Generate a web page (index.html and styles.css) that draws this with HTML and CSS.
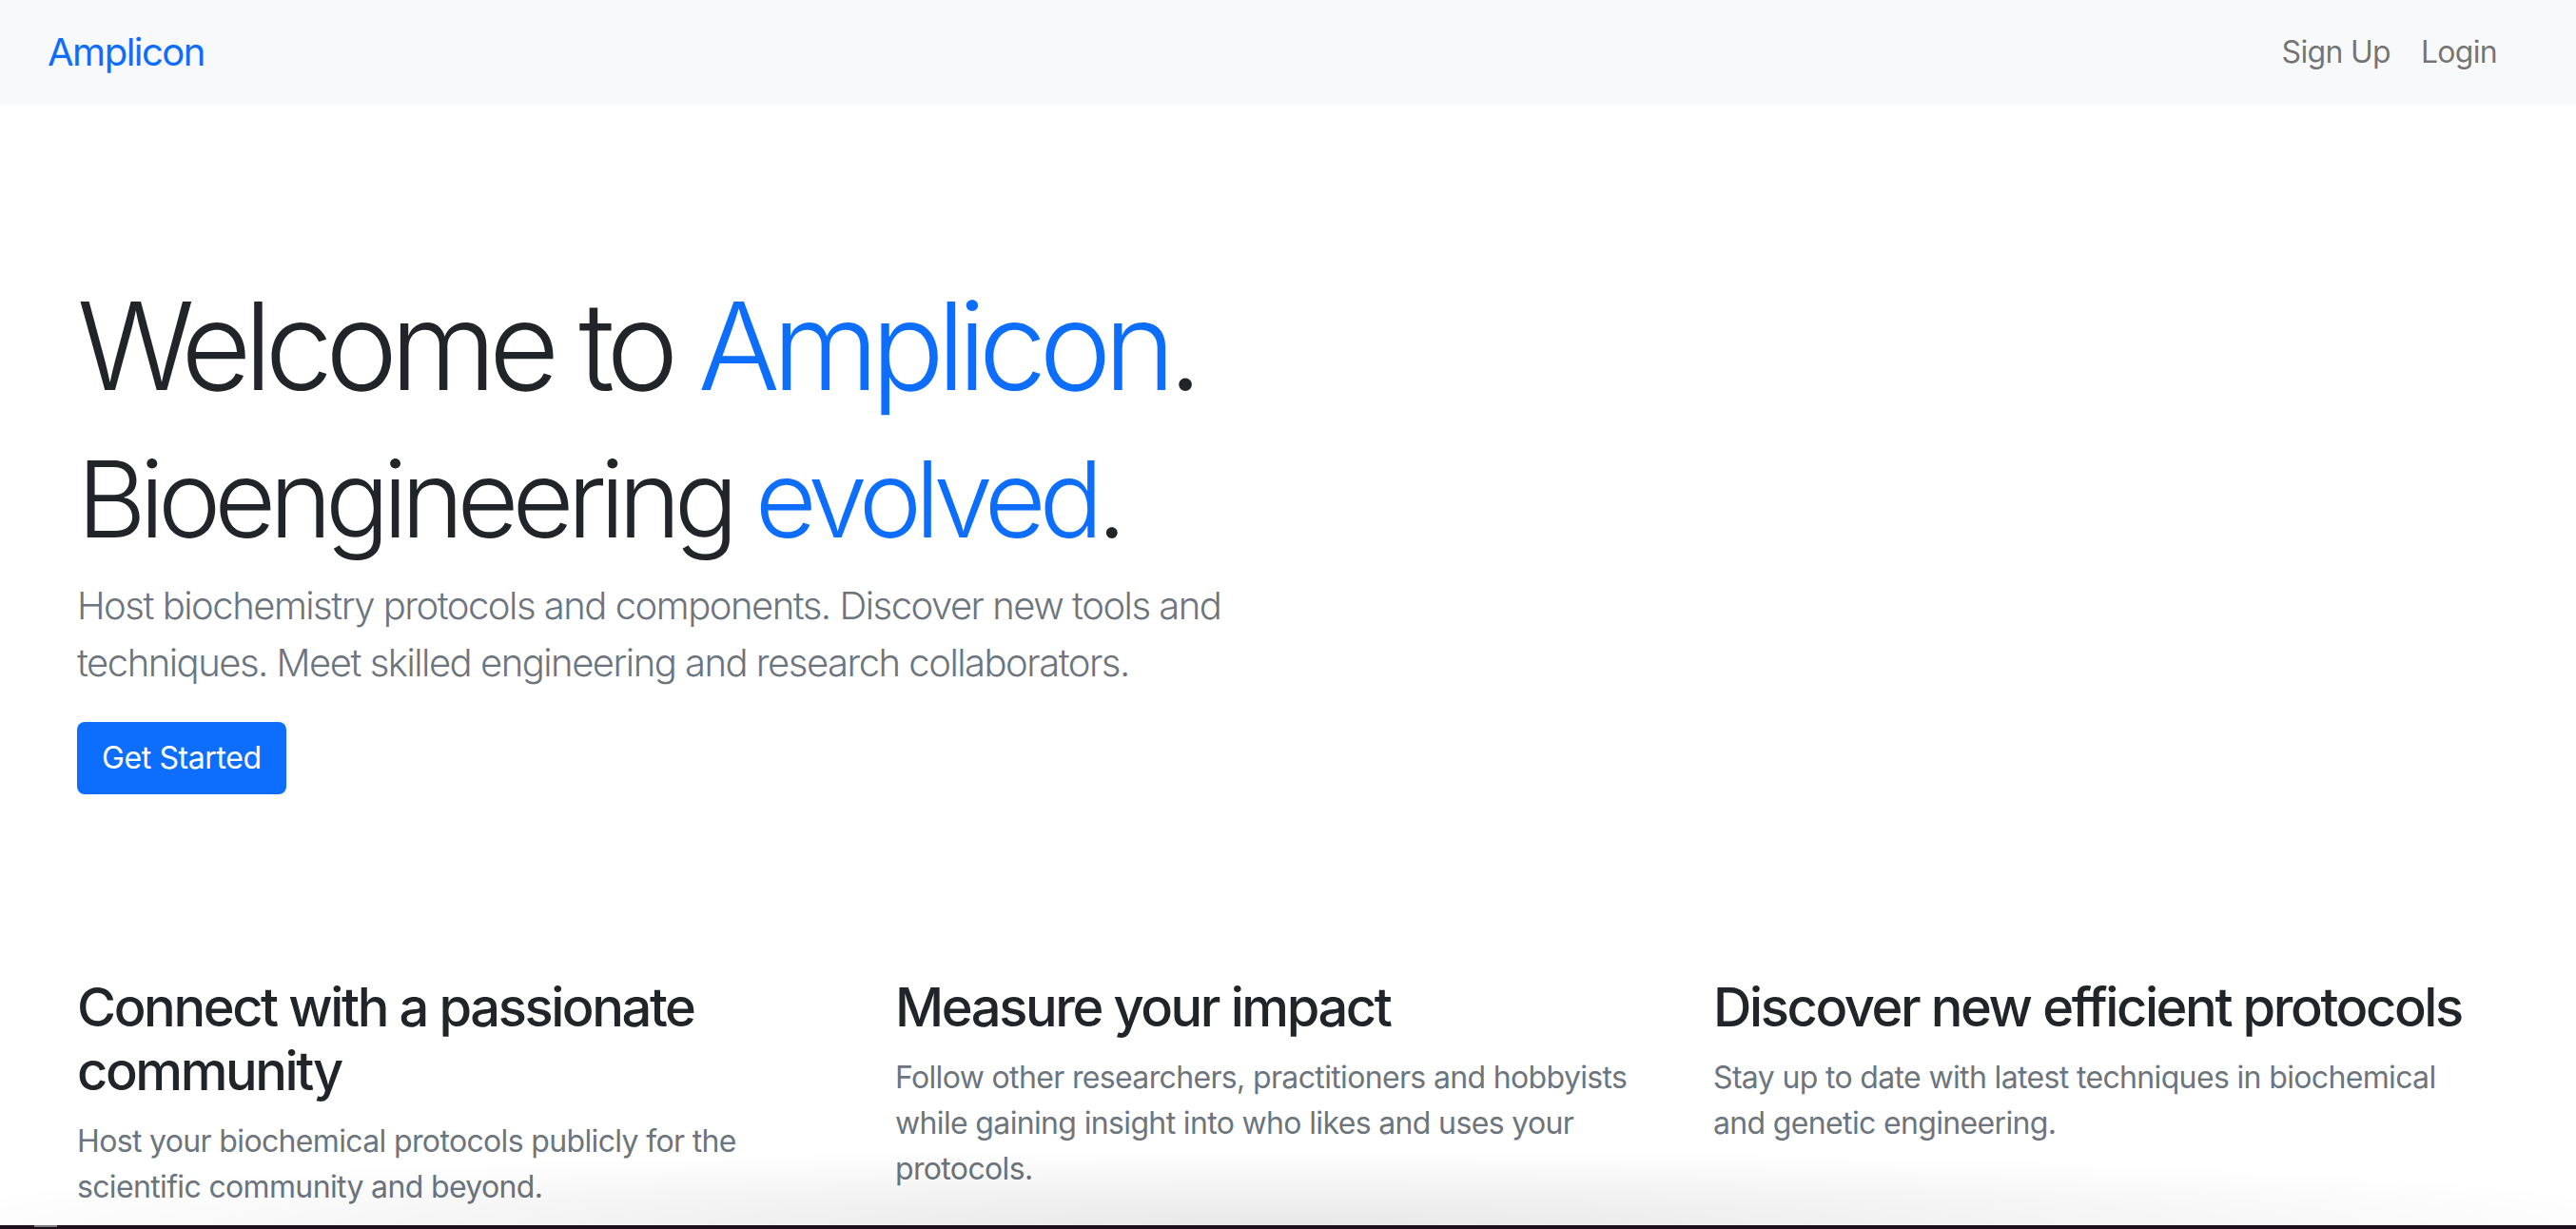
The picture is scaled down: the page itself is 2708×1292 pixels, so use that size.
FILE: index.html
```html
<!DOCTYPE html>
<html lang="en">
<head>
<meta charset="utf-8">
<title>Amplicon</title>
<link rel="stylesheet" href="styles.css">
</head>
<body>
<nav class="navbar">
  <a class="brand" href="#">Amplicon</a>
  <div class="nav-links">
    <a class="nav-link" href="#">Sign Up</a>
    <a class="nav-link" href="#">Login</a>
  </div>
</nav>
<main class="page">
  <section class="hero">
    <h1 class="display-main">Welcome to <span class="accent">Amplicon</span>.</h1>
    <h2 class="display-sub">Bioengineering <span class="accent">evolved</span>.</h2>
    <p class="lead">Host biochemistry protocols and components. Discover new tools and techniques. Meet skilled engineering and research collaborators.</p>
    <a class="btn-primary" href="#">Get Started</a>
  </section>
  <section class="features">
    <div class="feature">
      <h3 class="feature-title">Connect with a passionate community</h3>
      <p class="feature-text">Host your biochemical protocols publicly for the scientific community and beyond.</p>
    </div>
    <div class="feature">
      <h3 class="feature-title">Measure your impact</h3>
      <p class="feature-text">Follow other researchers, practitioners and hobbyists while gaining insight into who likes and uses your protocols.</p>
    </div>
    <div class="feature">
      <h3 class="feature-title">Discover new efficient protocols</h3>
      <p class="feature-text">Stay up to date with latest techniques in biochemical and genetic engineering.</p>
    </div>
  </section>
</main>
<div class="window-shadow"></div>
<div class="dock-bar"><span class="dock-mark"></span></div>
</body>
</html>
```

FILE: styles.css
```css
* { box-sizing: border-box; }

html, body {
  margin: 0;
  padding: 0;
  height: 100%;
  overflow: hidden;
  background: #ffffff;
}

body {
  font-family: Inter, "Noto Sans", "Liberation Sans", sans-serif;
  color: #212529;
  -webkit-font-smoothing: antialiased;
}

a { text-decoration: none; }

.navbar {
  height: 110px;
  background: #f8f9fa;
  display: flex;
  align-items: center;
  justify-content: space-between;
  padding: 0 67px 0 50px;
}

.brand {
  font-size: 40px;
  line-height: 60px;
  color: #0d6efd;
  font-weight: 400;
  letter-spacing: -1.5px;
}

.nav-links {
  display: flex;
}

.nav-link {
  font-size: 32px;
  line-height: 48px;
  color: rgba(0, 0, 0, 0.55);
  padding: 0 16px;
  letter-spacing: -0.7px;
}

.page {
  padding: 0 81px;
}

.hero {
  padding-top: 177px;
}

.display-main {
  margin: 0 0 16px;
  font-size: 128px;
  line-height: 1.2;
  font-weight: 300;
  letter-spacing: -7.9px;
}

.display-sub {
  margin: 0 0 16px;
  font-size: 112px;
  line-height: 1.2;
  font-weight: 300;
  letter-spacing: -7px;
}

.accent { color: #0d6efd; }

.lead {
  margin: 0 0 32px;
  max-width: 1260px;
  font-size: 40px;
  line-height: 60px;
  font-weight: 300;
  color: #6c757d;
  letter-spacing: -1.5px;
}

.btn-primary {
  display: inline-block;
  background: #0d6efd;
  color: #ffffff;
  border: 2px solid #0d6efd;
  border-radius: 8px;
  padding: 12px 24px;
  font-size: 32px;
  line-height: 48px;
  letter-spacing: -0.4px;
}

.features {
  margin-top: 191px;
  display: grid;
  grid-template-columns: repeat(3, 812px);
  column-gap: 48px;
}

.feature-title {
  margin: 0 0 16px;
  font-size: 56px;
  line-height: 1.2;
  font-weight: 500;
  letter-spacing: -2.4px;
}

.feature-text {
  margin: 0;
  font-size: 32px;
  line-height: 48px;
  color: #6c757d;
  letter-spacing: -0.65px;
}

.window-shadow {
  position: fixed;
  left: 0;
  right: 0;
  bottom: 4px;
  height: 80px;
  background: radial-gradient(ellipse 55% 100% at 50% 100%, rgba(0, 0, 0, 0.09), rgba(0, 0, 0, 0) 100%);
  pointer-events: none;
}

.dock-bar {
  position: fixed;
  left: 0;
  right: 0;
  bottom: 0;
  height: 4px;
  background: #1e0f1c;
}

.dock-mark {
  position: absolute;
  left: 36px;
  top: 0;
  width: 24px;
  height: 2px;
  background: #7a7a7a;
}
```
